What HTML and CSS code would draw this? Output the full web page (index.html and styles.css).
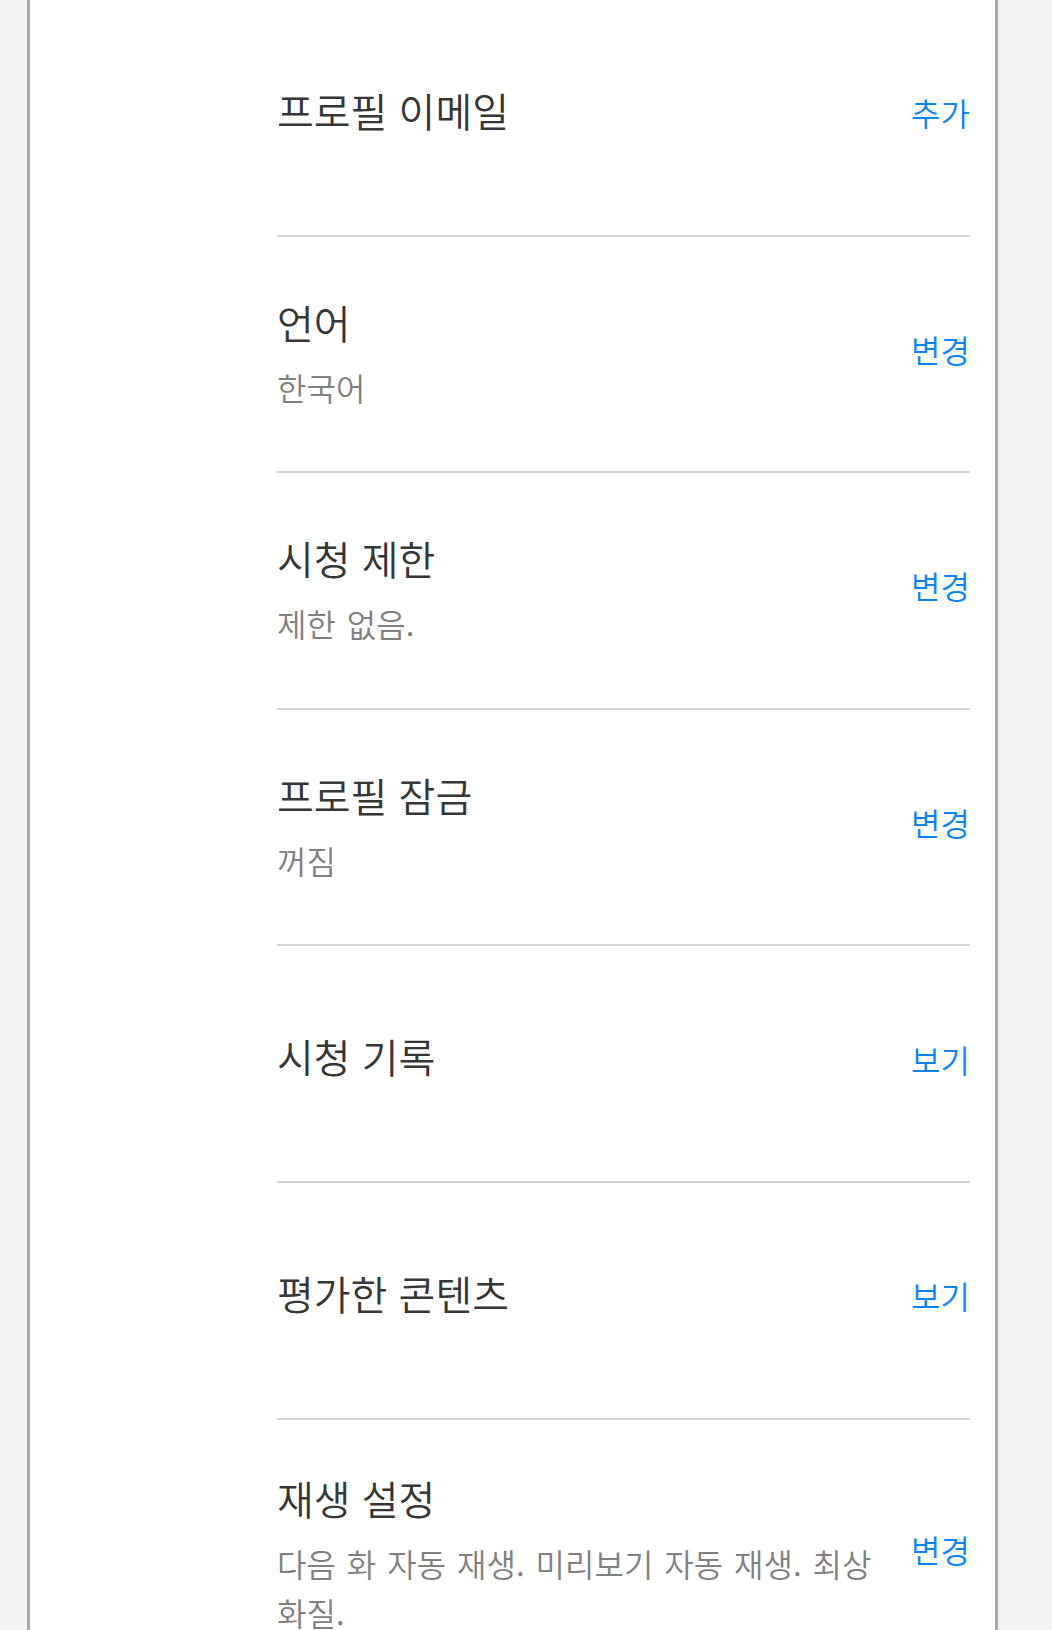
FILE: index.html
```html
<!DOCTYPE html>
<html lang="ko">
<head>
  <meta charset="UTF-8" />
  <title>계정 설정</title>
  <meta name="viewport" content="width=device-width, initial-scale=1" />
  <link rel="stylesheet" href="styles.css">
</head>
<body>
  <div class="panel">
    <ul class="settings">
      <li class="row">
        <div class="text"><div class="title">프로필 이메일</div></div>
        <a class="action" href="#">추가</a>
      </li>
      <li class="row">
        <div class="text">
          <div class="title">언어</div>
          <div class="sub">한국어</div>
        </div>
        <a class="action" href="#">변경</a>
      </li>
      <li class="row">
        <div class="text">
          <div class="title">시청 제한</div>
          <div class="sub">제한 없음.</div>
        </div>
        <a class="action" href="#">변경</a>
      </li>
      <li class="row">
        <div class="text">
          <div class="title">프로필 잠금</div>
          <div class="sub">꺼짐</div>
        </div>
        <a class="action" href="#">변경</a>
      </li>
      <li class="row">
        <div class="text"><div class="title">시청 기록</div></div>
        <a class="action" href="#">보기</a>
      </li>
      <li class="row">
        <div class="text"><div class="title">평가한 콘텐츠</div></div>
        <a class="action" href="#">보기</a>
      </li>
      <li class="row">
        <div class="text">
          <div class="title">재생 설정</div>
          <div class="sub">다음 화 자동 재생. 미리보기 자동 재생. 최상 화질.</div>
        </div>
        <a class="action" href="#">변경</a>
      </li>
    </ul>
  </div>
</body>
</html>
```

FILE: styles.css
```css
:root {
  --page-bg: #f2f2f2;
  --frame: #a9a9a9;
  --line: #d4d4d4;
  --title: #363636;
  --sub: #808080;
  --link: #0a84ff;
}
* { box-sizing: border-box; }
body {
  margin: 0;
  background: var(--page-bg);
  font-family: "Noto Sans CJK KR", "Noto Sans", sans-serif;
}
.panel {
  margin-left: 27px;
  width: 971px;
  min-height: 100vh;
  background: #fff;
  border-left: 3px solid var(--frame);
  border-right: 3px solid var(--frame);
  padding: 0 25px 0 247px;
}
.settings {
  list-style: none;
  margin: 0;
  padding: 0;
}
.row {
  display: flex;
  align-items: center;
  min-height: 236.6px;
  padding: 38px 0;
  border-bottom: 2px solid var(--line);
}
.text {
  flex: 1;
  min-width: 0;
  padding-bottom: 14px;
}
.title {
  font-size: 40px;
  font-weight: 350;
  line-height: 81px;
  color: var(--title);
}
.sub {
  font-size: 32px;
  font-weight: 350;
  line-height: 49px;
  word-spacing: 2px;
  color: var(--sub);
}
.action {
  margin-left: 16px;
  padding-bottom: 10px;
  font-size: 32px;
  font-weight: 350;
  line-height: 40px;
  color: var(--link);
  text-decoration: none;
  white-space: nowrap;
}
```
